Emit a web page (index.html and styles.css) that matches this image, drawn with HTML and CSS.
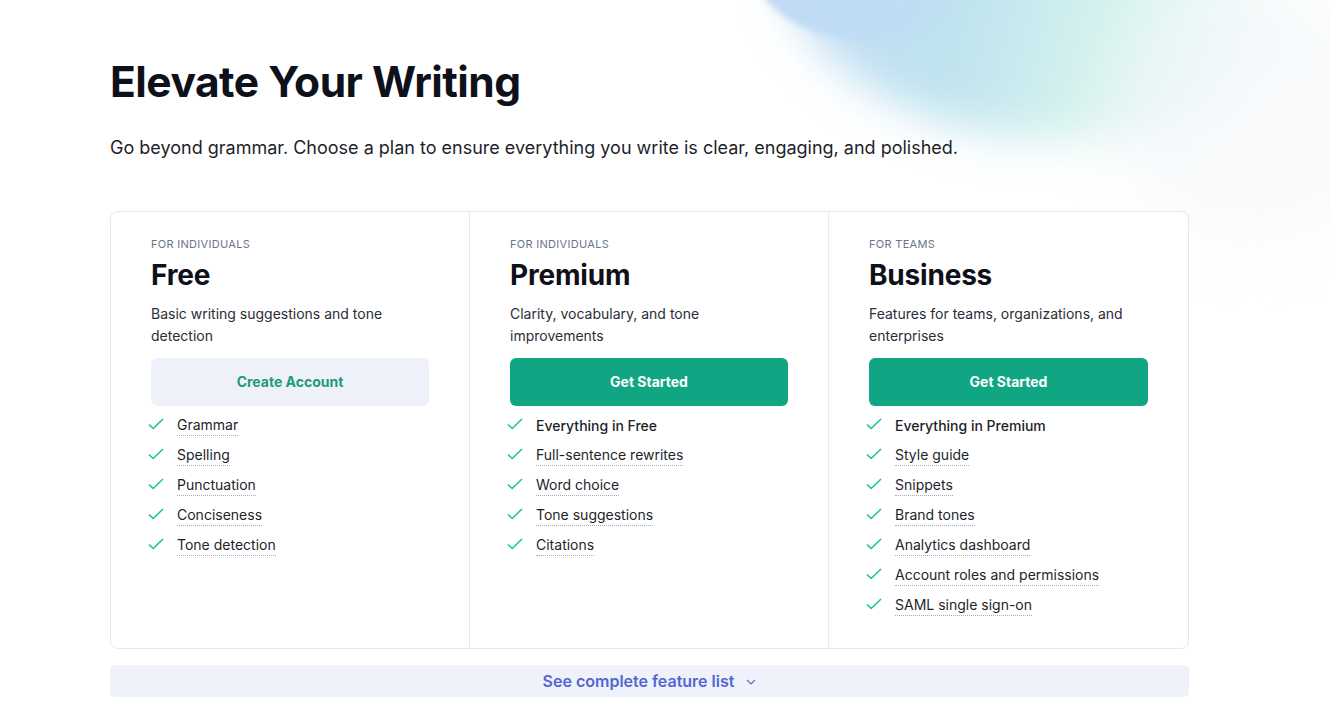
FILE: index.html
```html
<!DOCTYPE html>
<html lang="en">
<head>
  <meta charset="UTF-8" />
  <title>Plans — Elevate Your Writing</title>
  <meta name="viewport" content="width=device-width, initial-scale=1.0" />
  <link rel="stylesheet" href="styles.css">
</head>
<body>

<!-- decorative background -->
<div class="glow glow-soft"></div>
<div class="glow glow-blue"></div>
<div class="glow glow-grey"></div>

<div class="page">
  <h1 class="title">Elevate Your Writing</h1>
  <p class="lead">Go beyond grammar. Choose a plan to ensure everything you write is clear, engaging, and polished.</p>

  <div class="plans">
    <section class="plan">
      <div class="plan-kicker">For individuals</div>
      <h2 class="plan-name">Free</h2>
      <p class="plan-desc">Basic writing suggestions and tone detection</p>
      <a class="btn btn-light" href="#">Create Account</a>
      <ul class="features">
        <li><svg class="check" viewBox="0 0 16 12"><path d="M1 6.5l4.2 4L15 1"/></svg><span class="feat">Grammar</span></li>
        <li><svg class="check" viewBox="0 0 16 12"><path d="M1 6.5l4.2 4L15 1"/></svg><span class="feat">Spelling</span></li>
        <li><svg class="check" viewBox="0 0 16 12"><path d="M1 6.5l4.2 4L15 1"/></svg><span class="feat">Punctuation</span></li>
        <li><svg class="check" viewBox="0 0 16 12"><path d="M1 6.5l4.2 4L15 1"/></svg><span class="feat">Conciseness</span></li>
        <li><svg class="check" viewBox="0 0 16 12"><path d="M1 6.5l4.2 4L15 1"/></svg><span class="feat">Tone detection</span></li>
      </ul>
    </section>

    <section class="plan">
      <div class="plan-kicker">For individuals</div>
      <h2 class="plan-name">Premium</h2>
      <p class="plan-desc">Clarity, vocabulary, and tone improvements</p>
      <a class="btn btn-green" href="#">Get Started</a>
      <ul class="features">
        <li><svg class="check" viewBox="0 0 16 12"><path d="M1 6.5l4.2 4L15 1"/></svg><span class="feat-main">Everything in Free</span></li>
        <li><svg class="check" viewBox="0 0 16 12"><path d="M1 6.5l4.2 4L15 1"/></svg><span class="feat">Full-sentence rewrites</span></li>
        <li><svg class="check" viewBox="0 0 16 12"><path d="M1 6.5l4.2 4L15 1"/></svg><span class="feat">Word choice</span></li>
        <li><svg class="check" viewBox="0 0 16 12"><path d="M1 6.5l4.2 4L15 1"/></svg><span class="feat">Tone suggestions</span></li>
        <li><svg class="check" viewBox="0 0 16 12"><path d="M1 6.5l4.2 4L15 1"/></svg><span class="feat">Citations</span></li>
      </ul>
    </section>

    <section class="plan">
      <div class="plan-kicker">For teams</div>
      <h2 class="plan-name">Business</h2>
      <p class="plan-desc">Features for teams, organizations, and enterprises</p>
      <a class="btn btn-green" href="#">Get Started</a>
      <ul class="features">
        <li><svg class="check" viewBox="0 0 16 12"><path d="M1 6.5l4.2 4L15 1"/></svg><span class="feat-main">Everything in Premium</span></li>
        <li><svg class="check" viewBox="0 0 16 12"><path d="M1 6.5l4.2 4L15 1"/></svg><span class="feat">Style guide</span></li>
        <li><svg class="check" viewBox="0 0 16 12"><path d="M1 6.5l4.2 4L15 1"/></svg><span class="feat">Snippets</span></li>
        <li><svg class="check" viewBox="0 0 16 12"><path d="M1 6.5l4.2 4L15 1"/></svg><span class="feat">Brand tones</span></li>
        <li><svg class="check" viewBox="0 0 16 12"><path d="M1 6.5l4.2 4L15 1"/></svg><span class="feat">Analytics dashboard</span></li>
        <li><svg class="check" viewBox="0 0 16 12"><path d="M1 6.5l4.2 4L15 1"/></svg><span class="feat">Account roles and permissions</span></li>
        <li><svg class="check" viewBox="0 0 16 12"><path d="M1 6.5l4.2 4L15 1"/></svg><span class="feat">SAML single sign-on</span></li>
      </ul>
    </section>
  </div>

  <a class="more" href="#">
    See complete feature list
    <svg class="chev" width="10" height="6" viewBox="0 0 10 6"><path d="M1 1l4 4 4-4" fill="none" stroke="#5c6bd6" stroke-width="1.2"/></svg>
  </a>
</div>

</body>
</html>
```

FILE: styles.css
```css
body {
  font-family: Inter, "Noto Sans", sans-serif;
  background: #fff;
  color: #0e101a;
  margin: 0;
  padding: 0;
  overflow: hidden;
}

/* Фон */
.glow {
  position: absolute;
  border-radius: 50%;
  pointer-events: none;
}

.glow-soft {
  left: 780px;
  top: -250px;
  width: 560px;
  height: 390px;
  background: linear-gradient(105deg, #bcd6f6 0%, #c0e4ef 40%, #d8f4ee 62%, rgba(255,255,255,0) 88%);
  filter: blur(22px);
}

.glow-blue {
  left: 744px;
  top: -150px;
  width: 240px;
  height: 190px;
  background: linear-gradient(110deg, #c3d8f8 0%, #bfdcf4 60%, rgba(191,220,244,0) 100%);
  filter: blur(3px);
}

.glow-grey {
  left: 1110px;
  top: -10px;
  width: 280px;
  height: 250px;
  background: rgba(242, 245, 249, 0.5);
  filter: blur(30px);
}

/* Контент */
.page {
  position: relative;
  width: 1079px;
  margin: 0 0 0 110px;
  padding-top: 52px;
}

.title {
  margin: 0;
  font-size: 42.5px;
  font-weight: 700;
  letter-spacing: -0.5px;
  line-height: 60px;
}

.lead {
  margin: 23px 0 0;
  font-size: 18px;
  line-height: 26px;
  color: #1d1f2b;
}

.plans {
  display: grid;
  grid-template-columns: 358px 359px 1fr;
  margin-top: 50px;
  border: 1px solid #e6e8ec;
  border-radius: 8px;
  background: #fff;
  min-height: 435px;
}

.plan {
  padding: 25px 40px 27px;
  border-left: 1px solid #e8e9ee;
}

.plan:first-child {
  border-left: none;
}

.plan-kicker {
  font-size: 11px;
  text-transform: uppercase;
  letter-spacing: 0.3px;
  color: #6d758d;
  line-height: 14px;
}

.plan-name {
  margin: 6px 0 0;
  font-size: 28px;
  font-weight: 700;
  line-height: 36px;
  letter-spacing: -0.2px;
}

.plan-desc {
  margin: 10px 0 0;
  font-size: 14px;
  line-height: 22px;
  color: #2b2d38;
  min-height: 44px;
}

.btn {
  display: block;
  margin-top: 11px;
  height: 48px;
  line-height: 48px;
  text-align: center;
  font-size: 14px;
  font-weight: 700;
  text-decoration: none;
  border-radius: 6px;
}

.btn-light {
  background: #eef1fa;
  color: #1f9a78;
}

.btn-green {
  background: #11a683;
  color: #fff;
}

.features {
  list-style: none;
  margin: 5px 0 0 -3px;
  padding: 0;
}

.features li {
  display: flex;
  align-items: center;
  height: 30px;
  font-size: 14px;
  color: #1d1f2b;
}

.check {
  width: 16px;
  height: 12px;
  margin: -4px 13px 0 0;
  fill: none;
  stroke: #15c39a;
  stroke-width: 1.5;
}

.feat {
  border-bottom: 1px dotted #a7aab5;
  line-height: 18px;
  padding-bottom: 1px;
}

.feat-main {
  font-weight: 500;
  line-height: 18px;
}

.more {
  display: flex;
  justify-content: center;
  align-items: center;
  gap: 12px;
  margin-top: 16px;
  height: 32px;
  border-radius: 5px;
  background: #eff1fb;
  color: #5665d0;
  font-size: 16px;
  font-weight: 600;
  text-decoration: none;
}

.chev {
  margin-top: 2px;
}
```
